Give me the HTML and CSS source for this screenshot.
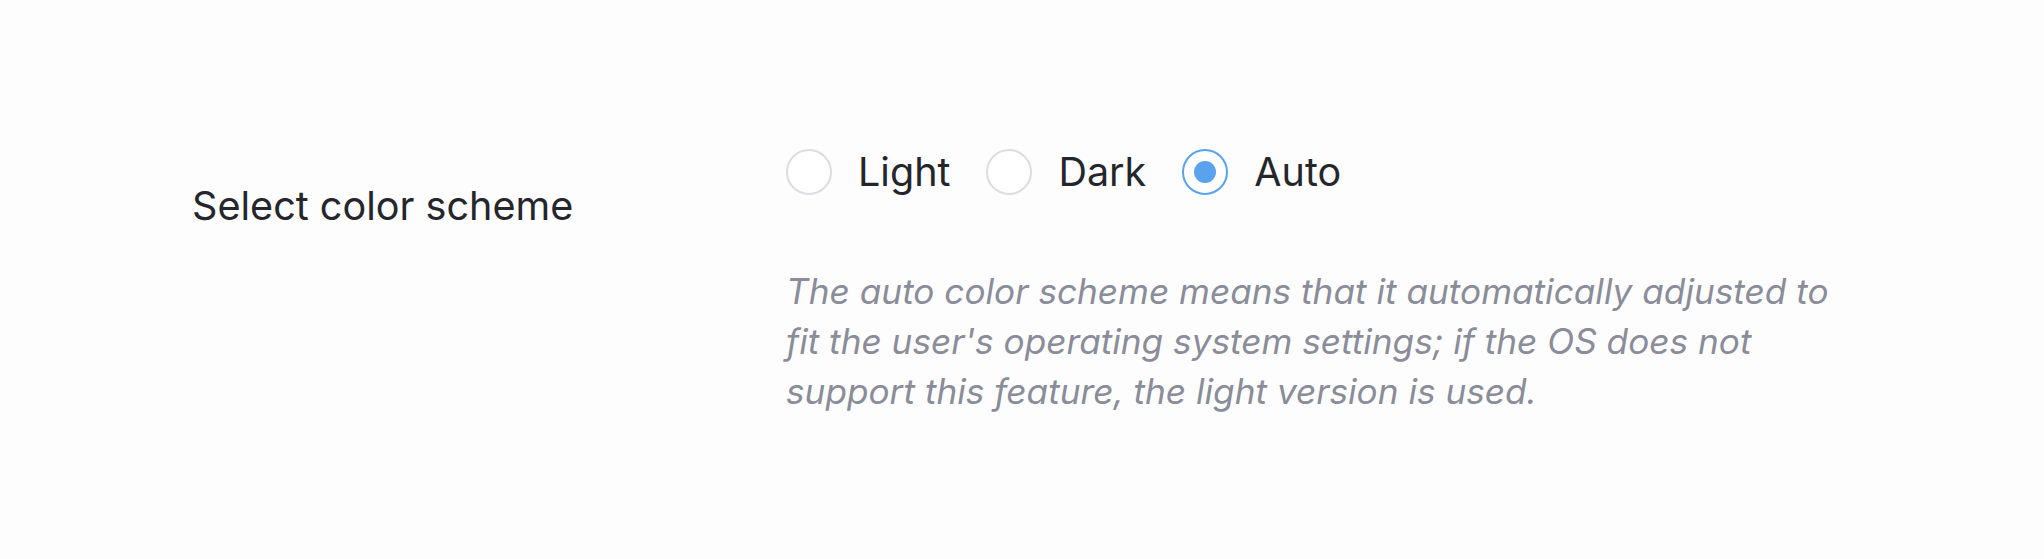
FILE: index.html
```html
<!DOCTYPE html>
<html lang="en">
<head>
<meta charset="utf-8">
<title>Color scheme</title>
<link rel="stylesheet" href="styles.css">
</head>
<body>
<div class="settings">
  <div class="row">
    <div class="label">Select color scheme</div>
    <div class="controls">
      <div class="radios">
        <label class="option"><span class="radio"></span><span class="opt-text">Light</span></label>
        <label class="option"><span class="radio"></span><span class="opt-text">Dark</span></label>
        <label class="option"><span class="radio checked"></span><span class="opt-text">Auto</span></label>
      </div>
      <p class="help">The auto color scheme means that it automatically adjusted to<br>fit the user's operating system settings; if the OS does not<br>support this feature, the light version is used.</p>
    </div>
  </div>
</div>
</body>
</html>
```
FILE: styles.css
```css
html, body {
  margin: 0;
  background: #fdfdfd;
}
body {
  font-family: Inter, "Noto Sans", "Liberation Sans", sans-serif;
  color: #24262b;
}
.settings {
  padding: 149px 0 0 192px;
}
.row {
  display: flex;
}
.label {
  width: 594px;
  font-size: 39.6px;
  padding-top: 34px;
  line-height: 46px;
}
.controls {
  display: flex;
  flex-direction: column;
}
.radios {
  display: flex;
  align-items: center;
  gap: 36px;
}
.option {
  display: flex;
  align-items: center;
  gap: 26px;
  font-size: 39.5px;
  line-height: 46px;
}
.radio {
  box-sizing: border-box;
  width: 46px;
  height: 46px;
  border-radius: 50%;
  border: 2.5px solid #dcdde1;
  background: #fff;
  display: flex;
  align-items: center;
  justify-content: center;
}
.radio.checked {
  border-color: #5aa2ee;
}
.radio.checked::after {
  content: "";
  width: 22px;
  height: 22px;
  border-radius: 50%;
  background: #5aa2ee;
}
.help {
  margin: 71px 0 0;
  font-size: 35.2px;
  line-height: 50.2px;
  font-style: italic;
  color: #8a8c99;
}
```
